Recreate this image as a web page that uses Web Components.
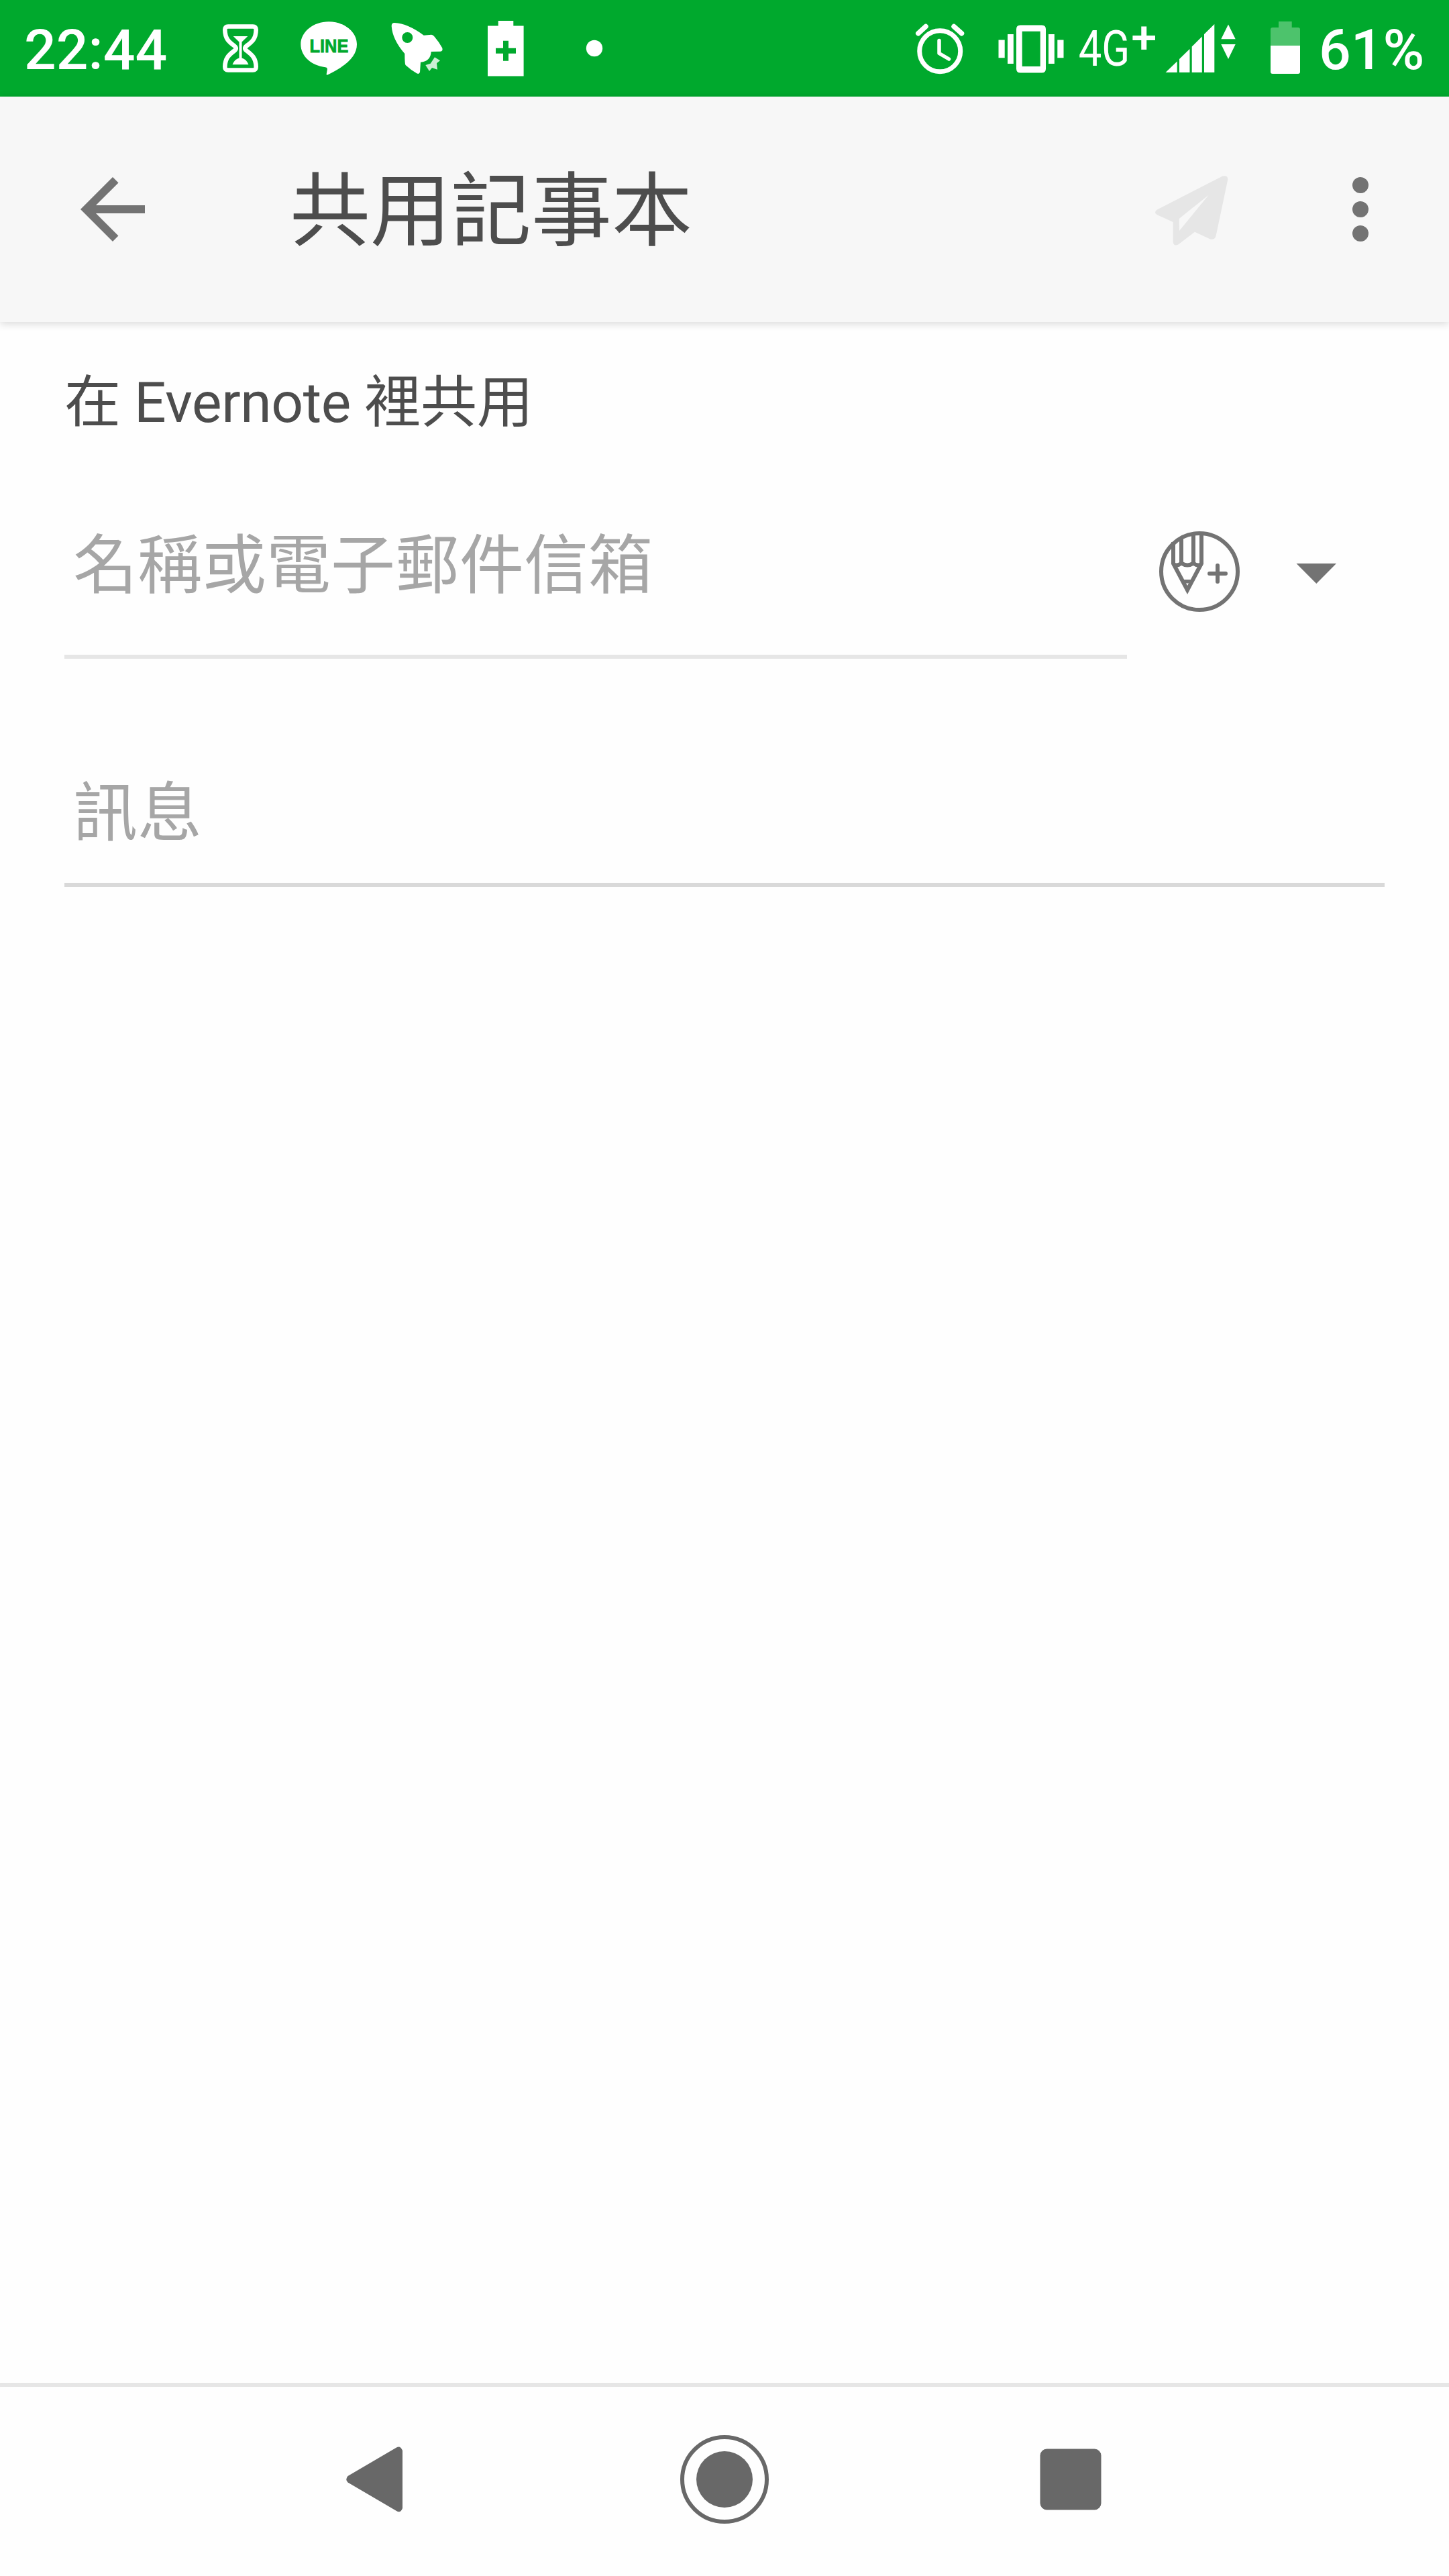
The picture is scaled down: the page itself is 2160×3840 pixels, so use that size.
<!DOCTYPE html>
<html lang="zh-Hant">
<head>
<meta charset="utf-8">
<title>共用記事本</title>
<style>
html, body {
    margin: 0;
    height: 100%;
}

body {
    font-family: Roboto, "Noto Sans CJK TC", sans-serif;
    background: #fefefe;
    color: #4d4d4d;
}
</style>
</head>
<body>
<share-screen>
    <status-bar slot="status" time="22:44" network="4G" battery="61%"></status-bar>
    <app-toolbar slot="toolbar">共用記事本</app-toolbar>
    <share-form heading="在 Evernote 裡共用">
        <text-field slot="recipient">名稱或電子郵件信箱</text-field>
        <text-field slot="message" class="message">訊息</text-field>
    </share-form>
    <nav-bar slot="nav"></nav-bar>
</share-screen>

<script>
// name: [viewBox, markup]
const ICONS = {
    hourglass: ["316 30 84 84", `
        <path fill="none" stroke="currentColor" stroke-width="6.6" d="M340 39.5H377q4.8 0 4.7 5C381.500 58 375.500 62.500 367.500 68.500q-4.500 3.500 0 7C375.500 81.500 381.500 86.500 381.700 99.500q.1 5-4.700 5H340q-4.800 0-4.700-5C335.500 86.500 341.500 81.500 349.500 75.500q4.500-3.500 0-7C341.500 62.500 335.500 58 335.300 44.500q-.1-5 4.700-5z"/>
        <path d="M347.700 54H369.300L360.500 62.500V86.500Q367 88 370.500 96.300H346.500Q350 88 356.500 86.500V62.500z"/>`],
    line: ["448 30 84 84", `
        <path d="M448.300 66C448.300 47.500 467 32.300 490 32.300S532 47.500 532 66c0 17-14 31-43 45.300-2 1-2.500.3-2.200-1.500l1-6c.3-2.500-.8-3.300-3-3.600C464 97.500 448.300 84 448.300 66z"/>
        <text x="461.500" y="78" font-family="Liberation Sans, sans-serif" font-weight="700" font-size="27" textLength="58" lengthAdjust="spacingAndGlyphs" fill="#00a92d" stroke="#00a92d" stroke-width=".8">LINE</text>`],
    rocket: ["580 30 84 84", `
        <path fill-rule="evenodd" d="M583.700 39Q583.500 34 588 34Q608 35 631.700 52.700L643 51.700Q645.500 52 647.500 54.500Q654 62 659.300 71.500Q660.500 76.500 656.500 76.700L642.700 77Q642 91.500 627 92.700L626 107.500Q625 111 621.500 109.500Q612 104 604.500 97Q603.300 95.500 603.300 80Q585 59 583.700 39zM615.300 56a8 8 0 1 0-16 0a8 8 0 1 0 16 0z"/>
        <path opacity=".8" d="M648 85.300L656 90.300L651 94.300L652 103.700L644 101L640 106L634.300 97L641.700 94.700z"/>`],
    batterySaver: ["712 30 84 84", `
        <path fill-rule="evenodd" d="M742.700 31H765.300V38.600H780.600V113.600H727V38.600H742.700zM750 60.700V71.700H739V79.700H750V90.700H758V79.700H769V71.700H758V60.700z"/>`],
    dot: ["844 30 84 84", `<circle cx="886" cy="72" r="12.200"/>`],
    alarm: ["1360 30 84 84", `
        <g fill="none" stroke="currentColor" stroke-linecap="round" stroke-linejoin="round">
            <circle cx="1401.200" cy="76.300" r="30.500" stroke-width="7"/>
            <path stroke-width="7.500" d="M1368.800 49.800L1380 39.500M1422 39.500L1433.500 49.800"/>
            <path stroke-width="5.500" d="M1400 60.500V79.500L1414.500 88"/>
        </g>`],
    vibrate: ["1488 30 100 84", `
        <path fill-rule="evenodd" d="M1521 37.500H1553Q1559 37.500 1559 43.500V102.500Q1559 108.500 1553 108.500H1521Q1515 108.500 1515 102.500V43.500Q1515 37.500 1521 37.500zM1523.700 46.700V99H1550.700V46.700z"/>
        <path d="M1502 51h8.800v44h-8.800zM1488.500 59.500h9.200v26.800h-9.200zM1563 51h8.800v44h-8.800zM1576.300 59.500h9.200v26.800h-9.200z"/>`],
    signal: ["1737 30 106 84", `
        <path d="M1737.500 108L1754.700 91.500V108zM1758 88L1773.500 73V108H1758zM1776.700 69.500L1791.800 54.500V108H1776.700zM1795 51L1810.300 36V108H1795z"/>
        <path d="M1831 36.500L1841.700 58.300H1820.300zM1820.300 66H1841.700L1831 88z"/>`],
    battery: ["1890 30 52 84", `
        <path opacity=".3" d="M1906 32H1925.700V41H1935Q1938 41 1938 44V68H1894V44Q1894 41 1897 41H1906z"/>
        <path d="M1894 68H1938V107Q1938 110 1935 110H1897Q1894 110 1894 107z"/>`],
    back: ["4 4 16 16", `<path d="M20 11H7.830l5.590-5.590L12 4l-8 8 8 8 1.410-1.410L7.830 13H20v-2z"/>`],
    send: ["1722 258 108 108", `
        <path fill-rule="evenodd" d="M1822.500 262.600Q1830.500 260.500 1830.200 268L1812.600 351.500Q1810.500 358.500 1803.500 356.200L1781 345.700L1756.500 364.500Q1749.500 368 1748.700 360.500V331L1725 320.300Q1719 316.500 1725 312.500zM1801.700 290.700L1757.700 326L1758 344z"/>`],
    more: ["2016 264 24 96", `<circle cx="2028" cy="276" r="12"/><circle cx="2028" cy="312" r="12"/><circle cx="2028" cy="348" r="12"/>`],
    pencilAdd: ["1728 792 120 120", `
        <g fill="none" stroke="currentColor" stroke-width="6">
            <circle cx="1788" cy="852" r="57"/>
            <path d="M1749 808V840L1770 879.500L1791 840V795M1761 800V839M1779 796V839"/>
            <path d="M1749 841Q1755 844.500 1761 839.500Q1770 845.500 1779 839.500Q1785 844.500 1791 841"/>
            <path stroke-linecap="round" d="M1803 855H1827M1815 843V867"/>
        </g>
        <path fill-rule="evenodd" d="M1762 864H1778L1770 882zM1768 869.500V873.500H1772V869.500z"/>`],
    caret: ["1932 840 60 30", `<path d="M1932.500 840H1992L1962.300 870z"/>`],
    navBack: ["516 3647 84 98", `<path d="M591 3648.500Q597 3645 600 3653V3739Q597 3747 591 3743L518.500 3700.500Q514 3696 518.500 3691z"/>`],
    navHome: ["1014 3630 132 132", `
        <circle cx="1080" cy="3696" r="63" fill="none" stroke="currentColor" stroke-width="6"/>
        <circle cx="1080" cy="3696" r="42"/>`],
    navRecent: ["1550 3650 92 92", `<rect x="1550.500" y="3650.500" width="91" height="91" rx="10"/>`]
};

function render(element, markup) {
    element.attachShadow({ mode: "open" }).innerHTML = markup;
}

class UiIcon extends HTMLElement {
    constructor() {
        super();
        this.attachShadow({ mode: "open" });
    }

    connectedCallback() {
        const [viewBox, markup] = ICONS[this.getAttribute("name")];
        const [, , width, height] = viewBox.split(" ");
        const size = this.getAttribute("size");

        this.shadowRoot.innerHTML = `
<style>
:host {
    display: block;
    flex: none;
}

svg {
    display: block;
    fill: currentColor;
    overflow: visible;
}
</style>
<svg viewBox="${viewBox}" width="${size || width}" height="${size || height}">${markup}</svg>`;
    }
}

class StatusBar extends HTMLElement {
    constructor() {
        super();
        render(this, `
<style>
:host {
    display: flex;
    align-items: center;
    justify-content: space-between;
    height: 144px;
    box-sizing: border-box;
    padding-left: 36px;
    background: #00a92d;
    color: #fff;
    font-size: 84px;
    font-weight: 500;
    line-height: 144px;
    white-space: nowrap;
}

.notifications {
    display: flex;
    align-items: center;
    gap: 48px;
}

.text {
    padding-top: 6px;
}

.time {
    width: 232px;
}

.system {
    display: grid;
    grid-template-columns: 128px 118px 131px 153px 76px 194px;
    align-items: center;
}

.network {
    display: flex;
    padding: 0 0 0 2px;
    font-size: 75px;
    font-weight: 400;
    transform: scaleX(.82);
    transform-origin: left;
}

.plus {
    font-size: 66px;
    font-weight: 500;
    margin: -15px 0 15px 3px;
    transform: scaleX(1.27);
    transform-origin: left;
}
</style>
<div class="notifications">
    <div class="text time"></div>
    <ui-icon name="hourglass"></ui-icon>
    <ui-icon name="line"></ui-icon>
    <ui-icon name="rocket"></ui-icon>
    <ui-icon name="batterySaver"></ui-icon>
    <ui-icon name="dot"></ui-icon>
</div>
<div class="system">
    <ui-icon name="alarm"></ui-icon>
    <ui-icon name="vibrate"></ui-icon>
    <div class="network"><span class="generation"></span><span class="plus">+</span></div>
    <ui-icon name="signal"></ui-icon>
    <ui-icon name="battery"></ui-icon>
    <div class="text level"></div>
</div>`);
    }

    connectedCallback() {
        this.shadowRoot.querySelector(".time").textContent = this.getAttribute("time");
        this.shadowRoot.querySelector(".generation").textContent = this.getAttribute("network");
        this.shadowRoot.querySelector(".level").textContent = this.getAttribute("battery");
    }
}

class AppToolbar extends HTMLElement {
    constructor() {
        super();
        render(this, `
<style>
:host {
    display: flex;
    align-items: center;
    height: 336px;
    box-sizing: border-box;
    padding: 0 120px;
    background: #f7f7f7;
    box-shadow: 0 2px 12px rgba(0, 0, 0, .16);
    color: #737373;
}

h1 {
    flex: 1;
    margin: 8px 0 0 216px;
    font-size: 120px;
    font-weight: 400;
    line-height: 160px;
    color: #4d4d4d;
}

.send {
    margin-right: 186px;
    color: #e6e6e6;
}
</style>
<ui-icon name="back" size="96"></ui-icon>
<h1><slot></slot></h1>
<ui-icon class="send" name="send"></ui-icon>
<ui-icon name="more"></ui-icon>`);
    }
}

class TextField extends HTMLElement {
    constructor() {
        super();
        render(this, `
<style>
:host {
    display: block;
    box-sizing: border-box;
    padding-left: 13px;
    border-bottom: 6px solid var(--underline, #e6e6e6);
    font-size: 96px;
    line-height: 126px;
    color: #a6a6a6;
}
</style>
<slot></slot>`);
    }
}

class ShareForm extends HTMLElement {
    constructor() {
        super();
        render(this, `
<style>
:host {
    display: block;
    padding: 61px 96px 0;
}

h2 {
    margin: 0;
    font-size: 84px;
    font-weight: 400;
    line-height: 120px;
    letter-spacing: -.4px;
}

.row {
    display: flex;
    align-items: flex-start;
    margin-top: 119px;
    color: #737373;
}

slot[name="recipient"]::slotted(*) {
    flex: 0 0 1584px;
    height: 202px;
}

slot[name="message"]::slotted(*) {
    --underline: #d9d9d9;
    height: 173px;
    margin-top: 167px;
}

.permission {
    display: flex;
    align-items: center;
    gap: 84px;
    margin: 12px 0 0 48px;
}

.caret {
    padding-top: 6px;
}
</style>
<h2></h2>
<div class="row">
    <slot name="recipient"></slot>
    <div class="permission">
        <ui-icon name="pencilAdd"></ui-icon>
        <ui-icon class="caret" name="caret"></ui-icon>
    </div>
</div>
<slot name="message"></slot>`);
    }

    connectedCallback() {
        this.shadowRoot.querySelector("h2").textContent = this.getAttribute("heading");
    }
}

class NavBar extends HTMLElement {
    constructor() {
        super();
        render(this, `
<style>
:host {
    display: flex;
    align-items: center;
    height: 288px;
    box-sizing: border-box;
    padding-left: 516px;
    border-top: 6px solid #e6e6e6;
    color: #686868;
}

.home {
    margin: 0 404px 0 414px;
}

ui-icon {
    padding-bottom: 6px;
}
</style>
<ui-icon name="navBack"></ui-icon>
<ui-icon class="home" name="navHome"></ui-icon>
<ui-icon name="navRecent"></ui-icon>`);
    }
}

class ShareScreen extends HTMLElement {
    constructor() {
        super();
        render(this, `
<style>
:host {
    display: flex;
    flex-direction: column;
    width: 2160px;
    height: 3840px;
    overflow: hidden;
}

main {
    flex: 1;
}
</style>
<slot name="status"></slot>
<slot name="toolbar"></slot>
<main><slot></slot></main>
<slot name="nav"></slot>`);
    }
}

window.customElements.define("ui-icon", UiIcon);
window.customElements.define("status-bar", StatusBar);
window.customElements.define("app-toolbar", AppToolbar);
window.customElements.define("text-field", TextField);
window.customElements.define("share-form", ShareForm);
window.customElements.define("nav-bar", NavBar);
window.customElements.define("share-screen", ShareScreen);
</script>
</body>
</html>
